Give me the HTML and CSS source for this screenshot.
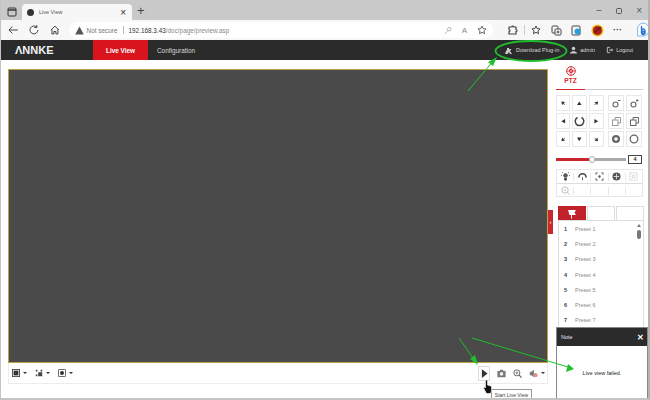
FILE: index.html
```html
<!doctype html>
<html lang="en">
<head>
  <meta charset="UTF-8">
  <title>Live View</title>
  <link rel="stylesheet" href="styles.css">
</head>
<body>
  <div class="tabstrip">
    <svg class="tabs-icon" width="10" height="10" viewBox="0 0 10 10"><rect x="1" y="1" width="8" height="8" rx="1" fill="none" stroke="#333" stroke-width="1"/><path d="M1 3h8" stroke="#333" stroke-width="1.5"/></svg>
    <div class="tab">
      <span class="favicon"></span>
      <span class="tab-title">Live View</span>
      <span class="tab-close">&times;</span>
    </div>
    <span class="new-tab">+</span>
    <div class="win-btns">
      <span class="win-btn">&minus;</span>
      <svg width="8" height="8" viewBox="0 0 8 8"><rect x="1.5" y="1.5" width="5" height="5" rx="1" fill="none" stroke="#555"/></svg>
      <span class="win-btn">&times;</span>
    </div>
  </div>

  <div class="toolbar">
    <svg width="12" height="12" viewBox="0 0 12 12"><path d="M11 6H2M5.500 2.500 2 6l3.500 3.500" fill="none" stroke="#444"/></svg>
    <svg width="12" height="12" viewBox="0 0 12 12"><path d="M10 6a4 4 0 1 1-1.200-2.900M9 1v2.500H6.500" fill="none" stroke="#444"/></svg>
    <svg width="12" height="12" viewBox="0 0 12 12"><path d="M2 6 6 2l4 4M3 5.500V10h2V7.500h2V10h2V5.500" fill="none" stroke="#444"/></svg>
    <div class="address">
      <svg width="9" height="9" viewBox="0 0 9 9"><path d="M4.500.5 8.800 8.500H.2z" fill="#555"/></svg>
      <span class="not-secure">Not secure</span>
      <span class="addr-sep"></span>
      <span class="url"><b>192.168.3.43</b>/doc/page/preview.asp</span>
      <div class="addr-icons">
        <svg width="8" height="9" viewBox="0 0 9 9"><circle cx="6" cy="3" r="2" fill="none" stroke="#aaa"/><path d="M4.500 4.500 1 8" stroke="#aaa"/></svg>
        <span class="read-aloud">A</span>
        <svg width="10" height="10" viewBox="0 0 10 10"><path d="M5 1l1.200 2.600 2.800.3-2 2 .5 2.800L5 7.300 2.500 8.700 3 5.900l-2-2 2.800-.3z" fill="none" stroke="#666"/></svg>
      </div>
    </div>
    <div class="browser-icons">
      <svg width="11" height="11" viewBox="0 0 11 11"><path d="M2 2h3a1 1 0 0 1 2 0h2v2.500a1 1 0 0 1 0 2V9H2V6.500a1 1 0 0 0 0-2z" fill="none" stroke="#444" stroke-width="1.200"/></svg>
      <span class="bar-sep"></span>
      <svg width="11" height="11" viewBox="0 0 11 11"><path d="M5 1l1.200 2.600 2.800.3-2 2 .5 2.800L5 7.300 2.500 8.700 3 5.900l-2-2 2.800-.3z" fill="none" stroke="#444"/></svg>
      <svg width="11" height="11" viewBox="0 0 11 11"><rect x="1" y="1" width="6" height="7" rx="1" fill="none" stroke="#444"/><rect x="4" y="4" width="6" height="6" rx="1" fill="#fff" stroke="#444"/><path d="M7 5.500v3M5.500 7h3" stroke="#444"/></svg>
      <svg width="11" height="11" viewBox="0 0 11 11"><rect x="1" y="1" width="8" height="9" rx="1" fill="none" stroke="#444"/><circle cx="6.500" cy="6.500" r="3" fill="#2a9fe0"/></svg>
      <svg width="13" height="13" viewBox="0 0 13 13"><circle cx="6.500" cy="6.500" r="6" fill="#e8c020"/><circle cx="6.500" cy="6.500" r="4.500" fill="#b01c1c"/><path d="M3 9l7-6" stroke="#222"/></svg>
      <span class="dots">&middot;&middot;&middot;</span>
      <svg class="bing" width="14" height="16" viewBox="0 0 14 16"><path d="M7 1a6 6 0 0 1 6 6v1a6 6 0 0 1-6 6H1.500V7A6 6 0 0 1 7 1z" fill="#fff" stroke="#7cbcf0"/><path d="M5.500 4v6.500a1.800 1.800 0 1 0 .2-.5M5.800 7.500a2 2 0 1 1 0 3" fill="none" stroke="#1f6fd0" stroke-width="1.300"/></svg>
    </div>
  </div>

  <header class="app-header">
    <span class="logo">&Lambda;NNKE</span>
    <nav class="main-nav">
      <a class="nav-item active">Live View</a>
      <a class="nav-item">Configuration</a>
    </nav>
    <div class="user-links">
      <span class="user-link">
        <svg width="9" height="9" viewBox="0 0 9 9"><path d="M1 8l1-3 1-1V2h2v1h2.500L6 5l2 3H6L5 6 3.500 8z" fill="#ccc"/></svg>
        Download Plug-in
      </span>
      <span class="user-link">
        <svg width="7" height="8" viewBox="0 0 8 8"><circle cx="4" cy="2.200" r="2" fill="#ccc"/><path d="M0 8V7l2.500-1.500h3L8 7v1z" fill="#ccc"/></svg>
        admin
      </span>
      <span class="user-link">
        <svg width="7" height="8" viewBox="0 0 8 8"><path d="M4.500 1h-3v6h3M3.500 4H8M6 2.500 7.500 4 6 5.500" fill="none" stroke="#ccc"/></svg>
        Logout
      </span>
    </div>
  </header>

  <main class="page">
    <section class="player">
      <div class="video"></div>
      <span class="side-handle">&rsaquo;</span>
      <div class="player-bar">
        <svg width="8" height="8" viewBox="0 0 10 10"><rect x=".5" y=".5" width="9" height="9" fill="#fff" stroke="#333"/><rect x="2" y="2" width="6" height="6" fill="#333"/></svg>
        <span class="caret"></span>
        <svg class="bar-gap" width="8" height="8" viewBox="0 0 10 10"><path d="M1 1h2v2H1zM7 1h2v2H7zM1 7h2v2H1zM4 4h5v5H4z" fill="#444"/></svg>
        <span class="caret"></span>
        <svg class="bar-gap" width="8" height="8" viewBox="0 0 10 10"><rect x=".5" y=".5" width="9" height="9" rx="1" fill="#fff" stroke="#333"/><circle cx="5" cy="5" r="2.500" fill="#333"/></svg>
        <span class="caret"></span>
        <span class="bar-fill"></span>
        <span class="play-btn"><svg width="7" height="9" viewBox="0 0 8 10"><path d="M1 0l6.500 5L1 10z" fill="#333"/></svg></span>
        <svg class="bar-icon" width="9" height="9" viewBox="0 0 11 10"><path d="M.5 2h2.500l1-1.500h3l1 1.500h2.500v7.500H.5z" fill="#777"/><circle cx="5.500" cy="5.500" r="2.200" fill="#eee"/></svg>
        <svg class="bar-icon" width="9" height="9" viewBox="0 0 11 11"><circle cx="4.700" cy="4.700" r="3.700" fill="none" stroke="#666" stroke-width="1.200"/><path d="M7.500 7.500 10.500 10.500" stroke="#666" stroke-width="1.500"/><path d="M3 4.700h3.400M4.700 3v3.400" stroke="#666"/></svg>
        <svg class="bar-icon" width="9" height="9" viewBox="0 0 11 10"><path d="M1 3h2l3-2.500v9L3 7H1z" fill="#777"/><circle cx="8" cy="7" r="2.500" fill="#e58a94"/></svg>
        <span class="caret"></span>
      </div>
    </section>

    <aside class="side">
      <div class="ptz-tab">
        <svg width="10" height="10" viewBox="0 0 10 10"><circle cx="5" cy="5" r="4.300" fill="none" stroke="#d4282e"/><circle cx="5" cy="5" r="1.800" fill="none" stroke="#d4282e"/><path d="M5 .5v9M.5 5h9" stroke="#d4282e" stroke-width=".7"/></svg>
        <span>PTZ</span>
      </div>

      <div class="ptz-pads">
        <div class="pad-grid dir-grid">
          <button class="pad-btn"><svg class="arrow" viewBox="0 0 6 6"><path d="M.5.500l5 1-2 1.500 2 2-.5.500-2-2-1.500 2z"/></svg></button>
          <button class="pad-btn"><svg class="arrow" viewBox="0 0 6 6"><path d="M3 .5 6 5.500H0z"/></svg></button>
          <button class="pad-btn"><svg class="arrow flip-x" viewBox="0 0 6 6"><path d="M.5.500l5 1-2 1.500 2 2-.5.500-2-2-1.500 2z"/></svg></button>
          <button class="pad-btn"><svg class="arrow turn-left" viewBox="0 0 6 6"><path d="M3 .5 6 5.500H0z"/></svg></button>
          <button class="pad-btn">
            <svg width="11" height="11" viewBox="0 0 11 11"><path d="M3.500 1.500a4.300 4.300 0 1 0 4 0" fill="none" stroke="#444" stroke-width="1.500"/></svg>
          </button>
          <button class="pad-btn"><svg class="arrow turn-right" viewBox="0 0 6 6"><path d="M3 .5 6 5.500H0z"/></svg></button>
          <button class="pad-btn"><svg class="arrow flip-y" viewBox="0 0 6 6"><path d="M.5.500l5 1-2 1.500 2 2-.5.500-2-2-1.500 2z"/></svg></button>
          <button class="pad-btn"><svg class="arrow flip-y" viewBox="0 0 6 6"><path d="M3 .5 6 5.500H0z"/></svg></button>
          <button class="pad-btn"><svg class="arrow flip-xy" viewBox="0 0 6 6"><path d="M.5.500l5 1-2 1.500 2 2-.5.500-2-2-1.500 2z"/></svg></button>
        </div>
        <div class="pad-grid lens-grid">
          <button class="pad-btn"><svg width="9" height="9" viewBox="0 0 9 9"><circle cx="3.500" cy="5.500" r="2.500" fill="none" stroke="#666" stroke-width="1.100"/><path d="M6 1.500h2.500" stroke="#666"/></svg></button>
          <button class="pad-btn"><svg width="9" height="9" viewBox="0 0 9 9"><circle cx="3.500" cy="5.500" r="2.500" fill="none" stroke="#666" stroke-width="1.100"/><path d="M6 1.500h2.500M7.200.3v2.400" stroke="#666"/></svg></button>
          <button class="pad-btn"><svg width="9" height="9" viewBox="0 0 9 9"><rect x=".5" y="3" width="5.500" height="5.500" fill="none" stroke="#999"/><path d="M3 3V.5h5.500V6H6" fill="none" stroke="#999"/></svg></button>
          <button class="pad-btn"><svg width="9" height="9" viewBox="0 0 9 9"><rect x=".5" y="3" width="5.500" height="5.500" fill="#fff" stroke="#666"/><path d="M3 3V.5h5.500V6H6" fill="none" stroke="#666"/></svg></button>
          <button class="pad-btn"><svg width="10" height="10" viewBox="0 0 10 10"><circle cx="5" cy="5" r="4" fill="#666"/><circle cx="5" cy="5" r="1.800" fill="#fff"/></svg></button>
          <button class="pad-btn"><svg width="10" height="10" viewBox="0 0 10 10"><circle cx="5" cy="5" r="3.800" fill="#fff" stroke="#666" stroke-width="1.300"/></svg></button>
        </div>
      </div>

      <div class="speed">
        <div class="speed-track"><span class="speed-fill"></span><span class="speed-thumb"></span></div>
        <span class="speed-value">4</span>
      </div>

      <div class="tool-box">
        <div class="tool-row">
          <span class="tool"><svg width="9" height="9" viewBox="0 0 10 10"><circle cx="5" cy="4" r="2.500" fill="#555"/><path d="M4 7h2v2H4zM1 4H0M10 4H9M2 1l-1-1M8 1l1-1" stroke="#555"/></svg></span>
          <span class="tool"><svg width="9" height="9" viewBox="0 0 10 10"><path d="M1 6a4 4 0 0 1 8 0" fill="none" stroke="#444" stroke-width="1.800"/><path d="M5 6v3" stroke="#444"/></svg></span>
          <span class="tool"><svg width="9" height="9" viewBox="0 0 10 10"><path d="M1 3V1h2M7 1h2v2M9 7v2H7M3 9H1V7" fill="none" stroke="#555"/><circle cx="5" cy="5" r="1.300" fill="#555"/></svg></span>
          <span class="tool"><svg width="9" height="9" viewBox="0 0 10 10"><circle cx="5" cy="5" r="4.500" fill="#555"/><path d="M5 2v6M2 5h6" stroke="#ddd"/></svg></span>
          <span class="tool"><svg width="9" height="9" viewBox="0 0 10 10"><rect x="1" y="1" width="8" height="8" fill="none" stroke="#ccc" stroke-dasharray="2 1"/><circle cx="5" cy="5" r="1.500" fill="none" stroke="#ccc"/></svg></span>
        </div>
        <div class="tool-row">
          <span class="tool"><svg width="9" height="9" viewBox="0 0 10 10"><circle cx="4.500" cy="4.500" r="3.500" fill="none" stroke="#bbb"/><path d="M7 7l2.500 2.500M3 4.500h3" stroke="#bbb"/></svg></span>
          <span class="tool"></span>
          <span class="tool"></span>
          <span class="tool"></span>
          <span class="tool"></span>
        </div>
      </div>

      <div class="preset-tabs">
        <span class="preset-tab active"><svg width="10" height="10" viewBox="0 0 10 10"><path d="M1 1h8L7.500 3.500 9 6H5v3.500H4V6H2.500z" fill="#fff"/></svg></span>
        <span class="preset-tab"></span>
        <span class="preset-tab"></span>
      </div>
      <div class="preset-list">
        <div class="preset-row"><b>1</b><span>Preset 1</span></div>
        <div class="preset-row"><b>2</b><span>Preset 2</span></div>
        <div class="preset-row"><b>3</b><span>Preset 3</span></div>
        <div class="preset-row"><b>4</b><span>Preset 4</span></div>
        <div class="preset-row"><b>5</b><span>Preset 5</span></div>
        <div class="preset-row"><b>6</b><span>Preset 6</span></div>
        <div class="preset-row"><b>7</b><span>Preset 7</span></div>
        <span class="scroll-up"></span>
        <span class="scroll-thumb"></span>
      </div>
    </aside>
  </main>

  <div class="note">
    <div class="note-head"><span>Note</span><span class="note-close">&#10005;</span></div>
    <div class="note-body">Live view failed.</div>
  </div>

  <div class="tooltip">Start Live View</div>
  <svg class="hand" width="10" height="14" viewBox="0 0 10 14"><path d="M2.500 1a1 1 0 0 1 2 0v4l4 1.200V11L7.500 13.500H3.500L.5 8l1-1 1 1z" fill="#111" stroke="#fff" stroke-width=".6"/></svg>

  <svg class="marks" width="650" height="400" viewBox="0 0 650 400">
    <g fill="none" stroke="#1fbf2e" stroke-width="1">
      <ellipse cx="531" cy="51" rx="35.500" ry="10" stroke-width="1.800"/>
      <path d="M468 91 494 60"/>
      <path d="M459 338 475 361"/>
      <path d="M472 338 568 367"/>
    </g>
    <g fill="#1fbf2e">
      <path d="M497 57 493 66 488 62z"/>
      <path d="M478 365 470 359 475 355z"/>
      <path d="M574 369 566 372 568 364z"/>
    </g>
  </svg>
  <div class="frame"></div>
</body>
</html>
```
FILE: styles.css
```css
* {
  box-sizing: border-box;
}
html, body {
  height: 100%;
}
body {
  margin: 0;
  width: 650px;
  height: 400px;
  overflow: hidden;
  position: relative;
  background: #fff;
  font-family: "Liberation Sans", Arial, sans-serif;
  font-size: 5.500px;
  color: #333;
  display: flex;
  flex-direction: column;
}
.frame {
  position: absolute;
  left: 0;
  top: 0;
  width: 650px;
  height: 400px;
  border-left: 1px solid #c4c4c4;
  border-right: 2px solid #b4b4b4;
  border-bottom: 2px solid #c4c4c4;
  pointer-events: none;
}
.tabstrip {
  height: 20px;
  background: #c9c9c9;
  display: flex;
  align-items: flex-end;
  padding-left: 7px;
}
.tabs-icon {
  margin-bottom: 3px;
}
.tab {
  width: 110px;
  height: 16px;
  margin-left: 5px;
  background: #f7f7f7;
  border-radius: 4px 4px 0 0;
  display: flex;
  align-items: center;
  padding: 0 6px 0 5px;
  color: #555;
}
.favicon {
  width: 7px;
  height: 7px;
  border-radius: 50%;
  background: #333;
  margin-right: 5px;
}
.tab-title {
  flex: 1;
}
.tab-close {
  font-size: 10px;
  color: #333;
}
.new-tab {
  margin: 0 0 1px 5px;
  font-size: 13px;
  line-height: 16px;
  color: #444;
}
.win-btns {
  margin-left: auto;
  align-self: center;
  display: flex;
  align-items: center;
  gap: 13px;
  padding-right: 8px;
  padding-top: 1px;
  color: #555;
}
.win-btn {
  font-size: 10px;
}
.toolbar {
  height: 20px;
  background: #f7f7f7;
  display: flex;
  align-items: center;
  padding-left: 7px;
  gap: 8px;
}
.toolbar > svg:first-child {
  margin-right: 1px;
}
.toolbar > svg:nth-child(2) {
  margin-right: 1px;
}
.address {
  width: 430px;
  height: 16px;
  background: #fff;
  border-radius: 8px;
  display: flex;
  align-items: center;
  padding: 0 6px 0 6px;
  font-size: 6.400px;
}
.not-secure {
  margin-left: 3px;
  color: #777;
}
.addr-sep {
  width: 1px;
  height: 8px;
  margin: 0 4px 0 6px;
  background: #bbb;
}
.url {
  color: #8a8a8a;
}
.url b {
  font-weight: normal;
  color: #333;
}
.addr-icons {
  margin-left: auto;
  display: flex;
  align-items: center;
  gap: 10px;
}
.read-aloud {
  font-size: 8px;
  color: #888;
}
.browser-icons {
  display: flex;
  align-items: center;
  gap: 9px;
  margin-left: 0;
  padding-left: 6px;
}
.bar-sep {
  width: 1px;
  height: 10px;
  margin: 0 -3px;
  background: #ccc;
}
.dots {
  font-size: 9px;
  font-weight: bold;
  color: #444;
}
.bing {
  margin-left: 5px;
}
.app-header {
  height: 20px;
  background: #2b2b2b;
  display: flex;
  align-items: stretch;
  padding: 0 17px 0 15px;
  color: #d8d8d8;
}
.logo {
  width: 78px;
  align-self: center;
  color: #f4f4f4;
  font-size: 11px;
  font-weight: bold;
}
.main-nav {
  display: flex;
  font-size: 6.400px;
}
.nav-item {
  display: flex;
  align-items: center;
  justify-content: center;
  padding: 0 9px;
}
.nav-item.active {
  width: 55px;
  background: #d9141c;
  color: #fff;
  font-weight: bold;
  padding: 0;
}
.user-links {
  margin-left: auto;
  display: flex;
  align-items: center;
  gap: 11px;
  font-size: 5.500px;
}
.user-link {
  display: flex;
  align-items: center;
  gap: 3px;
}
.page {
  flex: 1;
  display: flex;
  padding: 9px 6px 0 8px;
  gap: 8px;
}
.player {
  width: 540px;
  position: relative;
}
.video {
  height: 294px;
  background: #4a4a4a;
  border: 1px solid #bda544;
}
.side-handle {
  position: absolute;
  left: 540px;
  top: 141px;
  width: 5px;
  height: 24px;
  background: #c9262e;
  color: #fff;
  font-size: 6px;
  line-height: 24px;
  text-align: center;
}
.player-bar {
  height: 21px;
  display: flex;
  align-items: center;
  padding: 0 2px 0 3px;
  border: 1px solid #ececec;
  border-top: none;
}
.bar-gap {
  margin-left: 8px;
}
.caret {
  width: 0;
  height: 0;
  margin-left: 3px;
  border-left: 2px solid transparent;
  border-right: 2px solid transparent;
  border-top: 2.500px solid #333;
}
.bar-fill {
  flex: 1;
}
.play-btn {
  width: 12px;
  height: 15px;
  border: 1px solid #ddd;
  display: flex;
  align-items: center;
  justify-content: center;
}
.bar-icon {
  margin-left: 7px;
}
.side {
  width: 88px;
}
.ptz-tab {
  height: 23px;
  margin-top: -3px;
  margin-bottom: 6px;
  display: flex;
  flex-direction: column;
  align-items: center;
  width: 29px;
  color: #d4282e;
  font-weight: bold;
  font-size: 6.500px;
  gap: 1px;
  position: relative;
}
.ptz-tab::after {
  content: "";
  position: absolute;
  left: 0;
  top: 23px;
  width: 87px;
  height: 1px;
  background: linear-gradient(to right, #d4282e 29px, #ccc 29px);
}
.ptz-pads {
  display: flex;
  justify-content: space-between;
  padding-right: 2px;
}
.pad-grid {
  display: grid;
  grid-auto-rows: 16px;
  gap: 2px;
}
.dir-grid {
  grid-template-columns: 14px 15px 15px;
}
.lens-grid {
  grid-template-columns: 16px 16px;
}
.pad-btn {
  padding: 0;
  border: 1px solid #e8e8e8;
  background: #fff;
  display: flex;
  align-items: center;
  justify-content: center;
}
.arrow {
  width: 4.500px;
  height: 4.500px;
  fill: #333;
}
.flip-x {
  transform: scaleX(-1);
}
.flip-y {
  transform: scaleY(-1);
}
.flip-xy {
  transform: scale(-1, -1);
}
.turn-left {
  transform: rotate(-90deg);
}
.turn-right {
  transform: rotate(90deg);
}
.speed {
  margin-top: 8px;
  height: 9px;
  display: flex;
  align-items: center;
  gap: 2px;
  padding-right: 2px;
}
.speed-track {
  flex: 1;
  height: 3px;
  background: #aaa;
  position: relative;
}
.speed-fill {
  display: block;
  width: 35px;
  height: 3px;
  background: #c9262e;
}
.speed-thumb {
  position: absolute;
  left: 33px;
  top: -2px;
  width: 6px;
  height: 7px;
  border-radius: 50%;
  background: #fff;
  border: 1px solid #bbb;
}
.speed-value {
  width: 14px;
  height: 9px;
  border: 1px solid #444;
  text-align: center;
  font-size: 6px;
  line-height: 7px;
  font-weight: bold;
}
.tool-box {
  margin-top: 5px;
  height: 28px;
  width: 87px;
  border: 1px solid #e8e8e8;
}
.tool-row {
  height: 13px;
  display: flex;
  align-items: center;
}
.tool-row:first-child {
  height: 14px;
  border-bottom: 1px solid #ddd;
}
.tool {
  flex: 1;
  height: 8px;
  display: flex;
  align-items: center;
  justify-content: center;
  border-left: 1px solid #e8e8e8;
}
.tool:first-child {
  border-left: none;
}
.preset-tabs {
  margin: 9px 0 0 2px;
  display: flex;
  gap: 1px;
  height: 14px;
}
.preset-tab {
  flex: 1;
  border: 1px solid #ddd;
  border-bottom: none;
  display: flex;
  align-items: center;
  justify-content: center;
}
.preset-tab.active {
  background: #c1212a;
  border-color: #c1212a;
}
.preset-list {
  margin-left: 2px;
  height: 130px;
  border: 1px solid #ddd;
  position: relative;
}
.preset-row {
  height: 15.300px;
  display: flex;
  align-items: center;
  padding-left: 5px;
  color: #888;
}
.preset-row b {
  width: 11px;
  color: #444;
}
.scroll-up {
  position: absolute;
  right: 2px;
  top: 3px;
  width: 0;
  height: 0;
  border-left: 2px solid transparent;
  border-right: 2px solid transparent;
  border-bottom: 3px solid #777;
}
.scroll-thumb {
  position: absolute;
  right: 2px;
  top: 9px;
  width: 4px;
  height: 9px;
  border-radius: 2px;
  background: #777;
}
.note {
  position: absolute;
  left: 556px;
  top: 327px;
  width: 92px;
  height: 72px;
  background: #fff;
  border: 1px solid #888;
}
.note-head {
  height: 18px;
  background: #2b2b2b;
  color: #e8e8f8;
  display: flex;
  align-items: center;
  justify-content: space-between;
  padding: 0 3px 0 4px;
  font-size: 5.500px;
}
.note-close {
  font-size: 8px;
  font-weight: bold;
  color: #fff;
}
.note-body {
  margin-top: 24px;
  text-align: center;
  font-size: 5.500px;
  color: #222;
}
.tooltip {
  position: absolute;
  left: 491px;
  top: 389px;
  width: 41px;
  height: 13px;
  background: #fff;
  border: 1px solid #999;
  font-size: 5px;
  line-height: 11px;
  text-align: center;
  color: #444;
}
.hand {
  position: absolute;
  left: 483px;
  top: 380px;
}
.marks {
  position: absolute;
  left: 0;
  top: 0;
  pointer-events: none;
}
```
